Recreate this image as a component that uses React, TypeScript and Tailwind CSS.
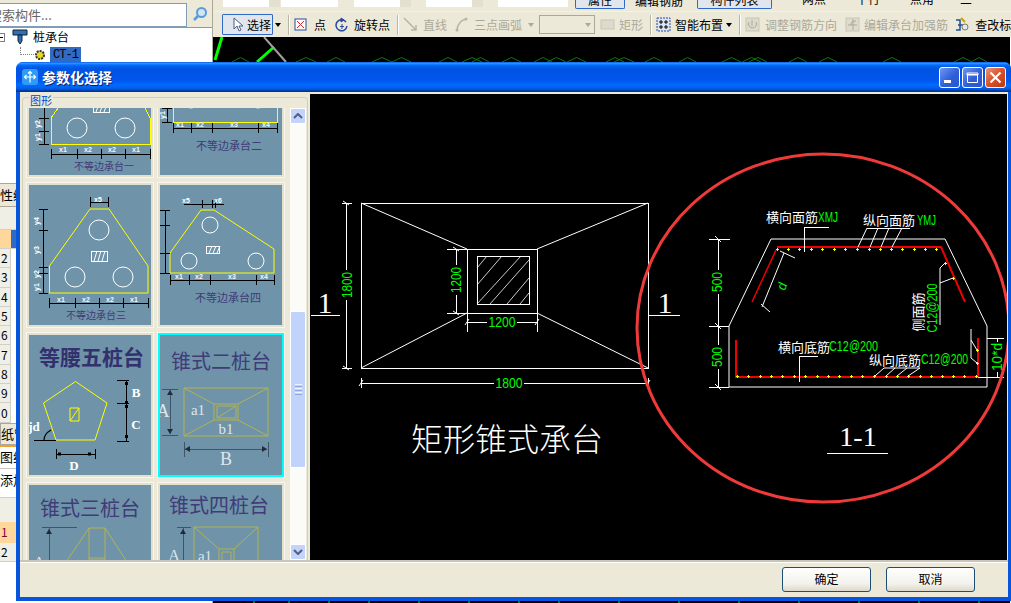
import React from 'react';

const CJK = '"Noto Sans CJK SC", "Liberation Sans", sans-serif';
const SERIF = '"Liberation Serif", "Noto Sans CJK SC", serif';
const CAD = '"Liberation Sans", "Noto Sans CJK SC", sans-serif';

type TextProps = React.SVGProps<SVGTextElement>;

function Label({ x, y, size = 12, fill = '#fff', family = CJK, rotate, bold, children, anchor = 'middle', ...rest }: {
  x: number; y: number; size?: number; fill?: string; family?: string; rotate?: number; bold?: boolean; anchor?: 'start' | 'middle' | 'end'; children: React.ReactNode;
} & Omit<TextProps, 'x' | 'y' | 'rotate'>) {
  return (
    <text
      x={x}
      y={y}
      fontSize={size}
      fill={fill}
      fontFamily={family}
      fontWeight={bold ? 700 : 400}
      textAnchor={anchor}
      dominantBaseline="central"
      transform={rotate ? `rotate(${rotate} ${x} ${y})` : undefined}
      {...rest}
    >
      {children}
    </text>
  );
}

// green dimension text, squeezed to the narrow CAD letter width
function DimText({ x, y, width, size = 14, rotate, anchor, children }: { x: number; y: number; width: number; size?: number; rotate?: number; anchor?: 'start' | 'middle'; children: React.ReactNode }) {
  return (
    <Label x={x} y={y} size={size} fill="#00ff00" family={CAD} rotate={rotate} anchor={anchor} textLength={width} lengthAdjust="spacingAndGlyphs">
      {children}
    </Label>
  );
}

function Lines({ d, stroke = '#fff', width = 1, crisp = true }: { d: string; stroke?: string; width?: number; crisp?: boolean }) {
  return <path d={d} fill="none" stroke={stroke} strokeWidth={width} shapeRendering={crisp ? 'crispEdges' : undefined} />;
}

function Hatch({ x, y, w, h }: { x: number; y: number; w: number; h: number }) {
  return (
    <>
      <rect x={x} y={y} width={w} height={h} fill="none" stroke="#fff" strokeWidth={1} shapeRendering="crispEdges" />
      <path
        d={`M${x + 3} ${y + h}l3 -${h}M${x + 7} ${y + h}l3 -${h}M${x + 11} ${y + h}l3 -${h}`}
        stroke="#fff"
        strokeWidth={1}
        fill="none"
      />
    </>
  );
}

function Pile({ cx, cy, r = 10 }: { cx: number; cy: number; r?: number }) {
  return <circle cx={cx} cy={cy} r={r} fill="none" stroke="#fff" strokeWidth={1} />;
}

function XLabels({ items, y }: { items: [number, string][]; y: number }) {
  return (
    <>
      {items.map(([x, t], i) => (
        <Label key={i} x={x} y={y} size={7} family={CAD} bold fill="#f2f5f7">{t}</Label>
      ))}
    </>
  );
}

function ThumbOne() {
  return (
    <>
      <Lines d="M58 108L51 118V144H150V118L145 108" stroke="#ffff00" />
      <Hatch x={93} y={104} w={16} h={8} />
      <Pile cx={77} cy={128} />
      <Pile cx={125} cy={128} />
      <Lines d="M44 108V144M39 118H49M39 131H49M39 144H49" stroke="#000" />
      <Label x={37} y={124} size={7} family={CAD} bold rotate={-90}>y2</Label>
      <Label x={37} y={137} size={7} family={CAD} bold rotate={-90}>y1</Label>
      <Lines d="M51 154H150M51 149V159M77 149V159M101 149V159M125 149V159M150 149V159" stroke="#000" />
      <XLabels y={149} items={[[63, 'x1'], [88, 'x2'], [112, 'x2'], [136, 'x1']]} />
      <Label x={104} y={165} size={10} fill="#3f3c78">不等边承台一</Label>
    </>
  );
}

function ThumbTwo() {
  return (
    <>
      <Lines d="M173 100V122H277V100" stroke="#ffff00" />
      <Pile cx={191} cy={100} r={8} />
      <Pile cx={258} cy={100} r={8} />
      <Lines d="M167 108V122M162 108H172M162 122H172" stroke="#000" />
      <Label x={162} y={115} size={7} family={CAD} bold rotate={-90}>y1</Label>
      <Lines d="M173 128H277M173 123V133M191 123V133M212 123V133M258 123V133M277 123V133" stroke="#000" />
      <XLabels y={124} items={[[180, 'x1'], [200, 'x2'], [234, 'x3'], [266, 'x4']]} />
      <Label x={229} y={145} size={11} fill="#3f3c78">不等边承台二</Label>
    </>
  );
}

function ThumbThree() {
  return (
    <>
      <Lines d="M49.5 293V266L90 209H109L148 266V293Z" stroke="#ffff00" crisp={false} />
      <Pile cx={99} cy={230} />
      <Pile cx={75} cy={277} />
      <Pile cx={123} cy={277} />
      <Hatch x={91} y={251} w={16} h={10} />
      <Lines d="M90 202H108M90 197V207M108 197V207" stroke="#000" />
      <Label x={98} y={199} size={7} family={CAD} bold>x5</Label>
      <Lines d="M43 209V293M39 209H48M39 230H48M39 267H48M39 273H48M39 293H48" stroke="#000" />
      <Label x={36} y={221} size={7} family={CAD} bold rotate={-90}>y4</Label>
      <Label x={36} y={250} size={7} family={CAD} bold rotate={-90}>y3</Label>
      <Label x={36} y={274} size={7} family={CAD} bold rotate={-90}>y2</Label>
      <Label x={36} y={287} size={7} family={CAD} bold rotate={-90}>y1</Label>
      <Lines d="M49 303H148M49 298V308M75 298V308M99 298V308M123 298V308M148 298V308" stroke="#000" />
      <XLabels y={299} items={[[61, 'x1'], [86, 'x2'], [110, 'x2'], [134, 'x1']]} />
      <Label x={96} y={314} size={10} fill="#3f3c78">不等边承台三</Label>
    </>
  );
}

function ThumbFour() {
  return (
    <>
      <Lines d="M170 273V253L201 210H214L274 249V273Z" stroke="#ffff00" crisp={false} />
      <Pile cx={210} cy={225} r={8} />
      <Pile cx={189} cy={261} r={8} />
      <Pile cx={256} cy={261} r={8} />
      <Hatch x={206} y={246} w={13} h={7} />
      <Lines d="M184 204H224M202 200V208M212 200V208M215 200V208" stroke="#000" />
      <Label x={186} y={200} size={7} family={CAD} bold>x5</Label>
      <Label x={218} y={200} size={7} family={CAD} bold>x6</Label>
      <Lines d="M165 210V273M160 210H170M160 225H170M160 253H170M160 273H170" stroke="#000" />
      <Lines d="M170 280H274M170 275V285M189 275V285M210 275V285M256 275V285M274 275V285" stroke="#000" />
      <XLabels y={276} items={[[179, 'x1'], [199, 'x2'], [232, 'x3'], [264, 'x4']]} />
      <Label x={228} y={297} size={11} fill="#3f3c78">不等边承台四</Label>
    </>
  );
}

function ThumbFive() {
  return (
    <>
      <Label x={91.5} y={356} size={21} fill="#33306e" bold>等腰五桩台</Label>
      <Lines d="M75.5 381.5L107 403L95 440H56L43.5 403Z" stroke="#ffff00" crisp={false} />
      <Lines d="M70 408H79V421H70ZM70 421L79 408" stroke="#ffff00" crisp={false} />
      <Lines d="M126.5 380V441M117 380H129M117 403H129M117 441H129M34 440H56M56 454H95M56 449V459M95 449V459" stroke="#000" />
      <path d="M125 382h3v3h-3zM125 401h3v3h-3zM125 405h3v3h-3zM125 435h3v3h-3zM58 452.500h3v3h-3zM88 452.500h3v3h-3z" fill="#000" />
      <path d="M44 440q0 -6 7 -10" fill="none" stroke="#000" strokeWidth={1.2} />
      <Label x={136} y={392} size={13} family={SERIF} bold>B</Label>
      <Label x={136} y={424} size={13} family={SERIF} bold>C</Label>
      <Label x={74} y={465} size={13} family={SERIF} bold>D</Label>
      <Label x={34} y={426} size={13} family={SERIF} bold>jd</Label>
    </>
  );
}

const OLIVE = '#b3b351';

function ThumbSix() {
  return (
    <>
      <Label x={221} y={360} size={20} fill="#3f3c78">锥式二桩台</Label>
      <Lines d="M184 388H268V436H184ZM214 404H238V420H214ZM217 406H236V418H217ZM217 418L236 406" stroke={OLIVE} crisp={false} />
      <Lines d="M184 388L214 404M268 388L238 404M184 436L214 420M268 436L238 420" stroke={OLIVE} crisp={false} />
      <Lines d="M162 389H178M162 435H178M170 390V434M184 449H267M184 442V457M268 442V457" stroke="#3e5468" />
      <path d="M170 390l-3 5h6zM170 434l-3 -5h6zM185 449l5 -3v6zM267 449l-5 -3v6z" fill="#1f2c38" />
      <Label x={163} y={411} size={18} family={SERIF} fill="#dfe6ea">A</Label>
      <Label x={198} y={410} size={15} family={SERIF} fill="#dfe6ea">a1</Label>
      <Label x={226} y={429} size={15} family={SERIF} fill="#dfe6ea">b1</Label>
      <Label x={226} y={459} size={18} family={SERIF} fill="#dfe6ea">B</Label>
    </>
  );
}

function ThumbSeven() {
  return (
    <>
      <Label x={90} y={507} size={20} fill="#3f3c78">锥式三桩台</Label>
      <Lines d="M42 527H77M49 527V570" stroke="#3e5468" />
      <path d="M49 529l-3 5h6z" fill="#1f2c38" />
      <Lines d="M89 528H105V560H89ZM89 528L66 562M105 528L127 562M89 558H105" stroke={OLIVE} crisp={false} />
      <Label x={39} y={562} size={16} family={SERIF} fill="#dfe6ea">A</Label>
    </>
  );
}

function ThumbEight() {
  return (
    <>
      <Label x={219} y={504} size={20} fill="#3f3c78">锥式四桩台</Label>
      <Lines d="M177 527H191M183 527V570" stroke="#3e5468" />
      <path d="M183 529l-3 5h6z" fill="#1f2c38" />
      <Lines d="M194 527H258V570H194ZM194 527L219 549M258 527L234 549M219 549H234V570H219ZM222 552H231V570H222Z" stroke={OLIVE} crisp={false} />
      <Label x={174} y={555} size={16} family={SERIF} fill="#dfe6ea">A</Label>
      <Label x={205} y={556} size={15} family={SERIF} fill="#dfe6ea">a1</Label>
    </>
  );
}

const thumbs = [
  { view: '29 35 122 140', node: <ThumbOne /> },
  { view: '160 35 122 140', node: <ThumbTwo /> },
  { view: '29 185 122 140', node: <ThumbThree /> },
  { view: '160 185 122 140', node: <ThumbFour /> },
  { view: '29 335 122 140', node: <ThumbFive /> },
  { view: '160 335 122 140', node: <ThumbSix />, selected: true },
  { view: '29 485 122 140', node: <ThumbSeven /> },
  { view: '160 485 122 140', node: <ThumbEight /> },
];

function ShapeCard({ view, selected, children }: { view: string; selected?: boolean; children: React.ReactNode }) {
  return (
    <div className="h-[146px] border border-[#f7f6ef] bg-[#e3e0d0] p-[2px]">
      <svg
        viewBox={view}
        className={selected ? 'block h-[140px] w-[122px] bg-[#6f93a9] outline-2 outline-[#00ffff]' : 'block h-[140px] w-[122px] bg-[#6f93a9]'}
      >
        {children}
      </svg>
    </div>
  );
}

function ScrollButton({ dir }: { dir: 'up' | 'down' }) {
  return (
    <div className="flex h-[16px] w-[16px] items-center justify-center rounded-[2px] border border-white bg-[#c3d3fb]">
      <svg width="10" height="6" viewBox="0 0 10 6">
        <path d={dir === 'up' ? 'M1 5l4 -4l4 4' : 'M1 1l4 4l4 -4'} fill="none" stroke="#4d6185" strokeWidth={2} />
      </svg>
    </div>
  );
}

function Scrollbar() {
  return (
    <div className="flex h-[452px] w-[16px] flex-col bg-[#fbfbf7]">
      <ScrollButton dir="up" />
      <div className="flex-1 pt-[187px]">
        <div className="flex h-[157px] items-center justify-center rounded-[2px] border border-white bg-[#c1d2fb]">
          <div className="flex w-[7px] flex-col gap-px">
            <div className="h-px bg-[#eef3ff]" />
            <div className="h-px bg-[#8fa8e0]" />
            <div className="h-px bg-[#eef3ff]" />
            <div className="h-px bg-[#8fa8e0]" />
            <div className="h-px bg-[#eef3ff]" />
            <div className="h-px bg-[#8fa8e0]" />
          </div>
        </div>
      </div>
      <ScrollButton dir="down" />
    </div>
  );
}

const topDots = [777, 788, 799, 811, 822, 834, 845, 857, 869, 880, 891, 902, 914, 925, 936];
const bottomDots = [737, 748, 760, 771, 782, 794, 805, 817, 828, 839, 851, 862, 874, 886, 897, 908, 920, 931, 942, 953, 964, 976];
const sideDots = [[945, 263], [953, 278], [977, 350], [977, 363]];

function Dot({ x, y }: { x: number; y: number }) {
  return <path d={`M${x - 1.5} ${y}h3M${x} ${y - 1.5}v3`} stroke="#ffff00" strokeWidth={1} shapeRendering="crispEdges" />;
}

function Drawing() {
  return (
    <svg viewBox="310 94 697 466" className="block h-[466px] w-[697px] bg-black">
      {/* plan view */}
      <Lines d="M361 203H648V368H361ZM467 249H537V313H467ZM477 256H529V304H477Z" />
      <Lines d="M361 203L467 249M648 203L537 249M361 368L467 313M648 368L537 313" crisp={false} />
      <path
        d="M477 268l10 -12M477 285l25 -29M477 304l44 -48M490 304l39 -44M507 304l22 -26M520 304l9 -11"
        fill="none"
        stroke="#fff"
        strokeWidth={0.8}
      />
      <Lines d="M346 203V368M342 203H352M342 368H352M456 249V313M447 249H467M447 313H467M467 322H537M467 313V332M537 313V332M361 383H648M361 378V388M648 378V388" />
      <path d="M343 201l6 4M343 366l6 4M453 247l6 4M453 311l6 4M465 325l4 -6M535 325l4 -6M359 386l4 -6M646 386l4 -6" stroke="#fff" strokeWidth={1} />
      <rect x={340} y={270} width={12} height={30} fill="#000" />
      <DimText x={347} y={285} width={26} rotate={-90}>1800</DimText>
      <rect x={450} y={265} width={12} height={30} fill="#000" />
      <DimText x={456} y={280} width={26} rotate={-90}>1200</DimText>
      <rect x={487} y={316} width={30} height={12} fill="#000" />
      <DimText x={502} y={322} width={27}>1200</DimText>
      <rect x={494} y={377} width={30} height={12} fill="#000" />
      <DimText x={509} y={383} width={27}>1800</DimText>
      <Lines d="M311 315H340M649 315H680" />
      <Label x={325} y={302} size={30} family={SERIF}>1</Label>
      <Label x={665} y={302} size={30} family={SERIF}>1</Label>
      <Label x={507} y={437} size={32} fontWeight={300}>矩形锥式承台</Label>

      {/* section 1-1 */}
      <Lines d="M729 387V326L771 239H945L987 326V387Z" crisp={false} />
      <Lines d="M718 239V387M709 239H730M709 326H729M709 387H729" />
      <path d="M715 236l6 6M715 323l6 6M715 384l6 6" stroke="#fff" strokeWidth={1} />
      <rect x={711} y={270} width={13} height={24} fill="#000" />
      <rect x={711} y={345} width={13} height={24} fill="#000" />
      <DimText x={717} y={282} width={20} rotate={-90}>500</DimText>
      <DimText x={717} y={357} width={20} rotate={-90}>500</DimText>
      <Lines d="M777 247H941L965 302" stroke="#f00000" width={2} crisp={false} />
      <Lines d="M776 250L752 302" stroke="#f00000" width={1.5} crisp={false} />
      <Lines d="M736 340V377H978V338" stroke="#f00000" width={2} />
      {topDots.map((x) => <Dot key={x} x={x} y={249} />)}
      {bottomDots.map((x) => <Dot key={x} x={x} y={376} />)}
      {sideDots.map(([x, y]) => <Dot key={y} x={x} y={y} />)}
      <Lines d="M804 252V227H829M867 228H910" />
      <Lines d="M867 228L858 247M878 228L870 247M889 228L881 247M902 228L892 247M784 253L762 307M780 251L795 258M761 304L770 312" crisp={false} />
      <Lines d="M940 325V268L945 263M940 283L953 278M971 329V358L977 363M971 340L977 350" crisp={false} />
      <Lines d="M799 382V356H818M987 338H1004M978 377H1004M997 338V377" />
      <Lines d="M884 368H920M884 368L875 376M895 368L886 376M907 368L897 376M920 368L908 376" crisp={false} />
      <Label x={766} y={216} size={13} anchor="start">横向面筋</Label>
      <DimText x={818} y={217} width={20} size={14} anchor="start">XMJ</DimText>
      <Label x={863} y={219} size={13} anchor="start">纵向面筋</Label>
      <DimText x={917} y={220} width={19} size={14} anchor="start">YMJ</DimText>
      <Label x={782} y={286} size={13} fill="#00ff00" family={CAD} rotate={-65}>d</Label>
      <Label x={917} y={312} size={13} rotate={-90}>侧面筋</Label>
      <DimText x={932} y={308} width={49} rotate={-90}>C12@200</DimText>
      <Label x={778} y={346} size={13} anchor="start">横向底筋</Label>
      <DimText x={829} y={346} width={49} anchor="start">C12@200</DimText>
      <Label x={869} y={359} size={13} anchor="start">纵向底筋</Label>
      <DimText x={921} y={359} width={47} anchor="start">C12@200</DimText>
      <rect x={990} y={342} width={14} height={30} fill="#000" />
      <DimText x={997} y={357} width={28} rotate={-90}>10*d</DimText>
      <Label x={858} y={436} size={28} family={SERIF}>1-1</Label>
      <Lines d="M827 453H888" />

      <ellipse cx={823} cy={328} rx={186} ry={174} fill="none" stroke="#f03a3a" strokeWidth={3} />
    </svg>
  );
}

function WinButton({ kind }: { kind: 'min' | 'max' | 'close' }) {
  const bg = kind === 'close'
    ? 'bg-[linear-gradient(135deg,#e9967a,#d9502a_50%,#b83a12)]'
    : 'bg-[linear-gradient(135deg,#6f97ee,#2f5fd8_55%,#2a56cf)]';
  return (
    <div className={`flex h-[21px] w-[21px] items-center justify-center rounded-[3px] border border-white ${bg}`}>
      <svg width="15" height="15" viewBox="0 0 15 15">
        {kind === 'min' && <rect x={2} y={10} width={7} height={3} fill="#fff" />}
        {kind === 'max' && <path d="M2.500 4.500h10v8h-10zM2 3h11v2H2z" fill="none" stroke="#fff" strokeWidth={1} />}
        {kind === 'close' && <path d="M2.500 2.500l10 10M12.500 2.500l-10 10" stroke="#fff" strokeWidth={2.2} />}
      </svg>
    </div>
  );
}

function DialogButton({ children }: { children: React.ReactNode }) {
  return (
    <button className="h-[25px] w-[89px] rounded-[3px] border border-[#1f4e79] bg-[linear-gradient(#ffffff,#f2f1ea_70%,#dcd9cb)] text-[12px] text-black">
      {children}
    </button>
  );
}

function Dialog() {
  return (
    <div
      className="absolute left-[16px] top-[62px] flex h-[539px] w-[995px] flex-col rounded-t-[7px] bg-[#0855dd] pb-[4px] pl-[4px] pr-[3px]"
      style={{ fontFamily: CJK }}
    >
      <div className="-ml-[4px] -mr-[3px] flex h-[30px] items-center rounded-t-[7px] bg-[linear-gradient(#0058ee_0%,#3593ff_4%,#288eff_6%,#127dff_8%,#036ffc_10%,#0262ee_14%,#0057e5_20%,#0054e3_24%,#0055eb_56%,#005bf5_66%,#026afe_76%,#0062ef_86%,#0052d6_92%,#0040ab_94%,#003092_100%)] pl-[6px] pr-[5px]">
        <div className="flex h-[16px] w-[16px] items-center justify-center rounded-[3px] bg-[#2f9bf5]">
          <svg width="14" height="14" viewBox="0 0 14 14">
            <path d="M7 1.500V12.500M1.500 7H12.500M3.500 5L1.500 7l2 2M10.500 5l2 2l-2 2M5 3.500l2 -2l2 2" fill="none" stroke="#fff" strokeWidth={1.2} />
          </svg>
        </div>
        <span className="ml-[4px] text-[14px] font-bold text-white [text-shadow:1px_1px_#0f1f6a]">参数化选择</span>
        <div className="ml-auto flex gap-[2px]">
          <WinButton kind="min" />
          <WinButton kind="max" />
          <WinButton kind="close" />
        </div>
      </div>

      <div className="flex min-h-0 flex-1 flex-col bg-[#ece9d8]">
        <div className="flex h-[468px] pr-px pt-[2px]">
          <div className="relative flex w-[290px] pl-[6px] pt-[14px]">
            <div className="absolute bottom-0 left-[2px] right-[2px] top-[3px] rounded-t-[4px] border border-b-0 border-[#d0d0bf]" />
            <span className="absolute left-[9px] -top-[1px] bg-[#ece9d8] px-px text-[11px] leading-[14px] text-[#0046d5]">图形</span>
            <div className="relative h-[452px] w-[264px] overflow-hidden">
              <div className="-mt-[76px] grid grid-cols-[128px_128px] gap-x-[3px] gap-y-[4px]">
                {thumbs.map((t) => (
                  <ShapeCard key={t.view} view={t.view} selected={t.selected}>{t.node}</ShapeCard>
                ))}
              </div>
            </div>
            <div className="relative">
              <Scrollbar />
            </div>
          </div>
          <Drawing />
        </div>
        <div className="flex flex-1 items-center justify-end gap-[15px] border-t-2 border-t-[#c9c6b6] pb-px pr-[33px] shadow-[inset_0_1px_#ffffff]">
          <DialogButton>确定</DialogButton>
          <DialogButton>取消</DialogButton>
        </div>
      </div>
    </div>
  );
}

function Sep({ className }: { className: string }) {
  return <div className={`h-[20px] w-[2px] shrink-0 border-l border-r border-l-[#b8b5a5] border-r-white ${className}`} />;
}

function Caret({ grey, className }: { grey?: boolean; className: string }) {
  return <span className={`h-0 w-0 shrink-0 border-x-[3px] border-t-[4px] border-x-transparent ${grey ? 'border-t-[#aca899]' : 'border-t-black'} ${className}`} />;
}

function Tool({ icon, label, grey, className, gap = 'ml-[5px]' }: { icon: React.ReactNode; label: string; grey?: boolean; className: string; gap?: string }) {
  return (
    <div className={`flex shrink-0 items-center ${grey ? 'text-[#aca899]' : 'text-black'} ${className}`}>
      {icon}
      <span className={gap}>{label}</span>
    </div>
  );
}

function Icon({ children }: { children: React.ReactNode }) {
  return <svg width="15" height="15" viewBox="0 0 15 15" className="shrink-0">{children}</svg>;
}

function Toolbar() {
  return (
    <div className="flex h-[25px] items-center whitespace-nowrap bg-[#ece9d8] pl-[8px] text-[12px]">
      <div className="flex h-[21px] w-[51px] shrink-0 items-center rounded-[1px] border border-[#316ac5] bg-[#e1e6ee] pl-[8px]">
        <Icon><path d="M3 1v11l3 -3l2 5l2 -1l-2 -4h4z" fill="#fff" stroke="#4a5a80" /></Icon>
        <span className="ml-[1px]">选择</span>
      </div>
      <Caret className="ml-[2px]" />
      <Sep className="ml-[7px]" />
      <Tool
        className="ml-[3px]"
        gap="ml-[6px]"
        label="点"
        icon={<Icon><rect x={2} y={2} width={11} height={11} fill="#fff" stroke="#274a9c" /><path d="M4 4l7 7M11 4l-7 7" stroke="#e02020" /></Icon>}
      />
      <Tool
        className="ml-[8px]"
        label="旋转点"
        icon={<Icon><path d="M12 5a5.500 5.500 0 1 0 1 4" fill="none" stroke="#274a9c" strokeWidth={1.5} /><path d="M7 1l3 2l-3 2zM8 7v5M6 9.500h4" fill="#274a9c" stroke="#274a9c" /></Icon>}
      />
      <Sep className="ml-[7px]" />
      <Tool
        grey
        className="ml-[4px]"
        label="直线"
        icon={<Icon><path d="M1 1l12 12M13 8v5h-5" fill="none" stroke="#b8b5a5" strokeWidth={1.5} /></Icon>}
      />
      <Tool
        grey
        className="ml-[7px]"
        label="三点画弧"
        icon={<Icon><path d="M3 13q1 -9 9 -11" fill="none" stroke="#b8b5a5" strokeWidth={1.5} /><circle cx={3} cy={13} r={1.500} fill="#b8b5a5" /><circle cx={12} cy={2} r={1.500} fill="#b8b5a5" /></Icon>}
      />
      <Caret grey className="ml-[6px]" />
      <div className="ml-[5px] flex h-[19px] w-[56px] shrink-0 items-center justify-end border border-[#aca899] pr-[3px]">
        <span className="h-0 w-0 border-x-[3px] border-t-[4px] border-x-transparent border-t-[#aca899]" />
      </div>
      <Tool
        grey
        className="ml-[5px]"
        gap="ml-[4px]"
        label="矩形"
        icon={<Icon><rect x={1} y={3} width={13} height={9} fill="#dedbcc" stroke="#c9c6b6" /></Icon>}
      />
      <Sep className="ml-[7px]" />
      <Tool
        className="ml-[4px]"
        gap="ml-[4px]"
        label="智能布置"
        icon={<Icon><rect x={1} y={1} width={13} height={13} fill="#dbe4f5" stroke="#274a9c" strokeDasharray="2 1" /><path d="M5 3v4M3 5h4M10 3v4M8 5h4M5 8v4M3 10h4M10 8v4M8 10h4" stroke="#000" /></Icon>}
      />
      <Caret className="ml-[3px]" />
      <Sep className="ml-[7px]" />
      <Tool
        grey
        className="ml-[4px]"
        label="调整钢筋方向"
        icon={<Icon><rect x={1} y={1} width={13} height={13} fill="#dedbcc" stroke="#c9c6b6" /><path d="M4 5a4 4 0 1 0 7 0M7 3v6" fill="none" stroke="#aca899" /></Icon>}
      />
      <Tool
        grey
        className="ml-[8px]"
        gap="ml-[4px]"
        label="编辑承台加强筋"
        icon={<Icon><rect x={1} y={1} width={13} height={13} fill="#dedbcc" stroke="#c9c6b6" /><path d="M8 2v11M3 8h9M11 4q-5 0 -5 4" fill="none" stroke="#aca899" /></Icon>}
      />
      <Tool
        className="ml-[7px]"
        label="查改标"
        icon={<Icon><path d="M1 3h4v10H1M3 8h5" fill="none" stroke="#1f4e9c" strokeWidth={1.5} /><path d="M6 1l4 4" stroke="#c9a400" strokeWidth={2} /><circle cx={10} cy={10} r={3} fill="#dbe9f8" stroke="#8a7a50" /></Icon>}
      />
    </div>
  );
}

function TopStrip() {
  return (
    <div className="flex h-[12px] items-start overflow-hidden border-b border-b-[#f4f2e8] bg-[#ece9d8] text-[12px]">
      <div className="ml-[9px] flex h-[7px] w-[57px] shrink-0 justify-end bg-white"><span className="w-[11px] bg-[#e3e0d0]" /></div>
      <div className="ml-[1px] h-[7px] w-[57px] shrink-0 bg-white" />
      <div className="ml-[16px] flex h-[7px] w-[57px] shrink-0 justify-end bg-white"><span className="w-[11px] bg-[#e3e0d0]" /></div>
      <div className="ml-[15px] flex h-[7px] w-[57px] shrink-0 justify-end bg-white"><span className="w-[11px] bg-[#e3e0d0]" /></div>
      <div className="ml-[15px] h-[7px] w-[70px] shrink-0 bg-white" />
      <div className="ml-[7px] flex h-[9px] w-[50px] shrink-0 items-end justify-center rounded-b-[2px] border border-t-0 border-[#316ac5] bg-[#e1e6ee] leading-[16px]">属性</div>
      <span className="ml-[10px] -mt-[7px] shrink-0 leading-[16px]">编辑钢筋</span>
      <div className="ml-[14px] flex h-[9px] w-[75px] shrink-0 items-end justify-center rounded-b-[2px] border border-t-0 border-[#316ac5] bg-[#e1e6ee] leading-[16px]">构件列表</div>
      <span className="ml-[30px] -mt-[9px] shrink-0 leading-[16px]">两点</span>
      <span className="ml-[30px] -mt-[9px] shrink-0 leading-[16px]">平行</span>
      <span className="ml-[30px] -mt-[9px] shrink-0 leading-[16px]">点角</span>
      <span className="ml-[26px] -mt-[9px] shrink-0 leading-[16px]">三</span>
    </div>
  );
}

const gridRows = ['2', '3', '4', '5', '6', '7', '8', '9', '0'];

function LeftPanel() {
  return (
    <div className="flex h-full w-[213px] shrink-0 flex-col border-r border-r-[#aca899] bg-white text-[12px]">
      <div className="flex h-[28px] shrink-0 items-start border-b border-b-[#7f9db9] bg-[#ece9d8] pt-[3px]">
        <div className="-ml-[13px] flex h-[24px] w-[200px] items-center border border-[#7f9db9] bg-white pl-[1px] text-[13px] text-[#666]">搜索构件...</div>
        <div className="ml-[3px] flex h-[22px] w-[20px] items-center justify-center">
          <svg width="16" height="16" viewBox="0 0 16 16">
            <circle cx={9.500} cy={6.500} r={4.500} fill="#cfe5f8" stroke="#5b9bd5" strokeWidth={2} />
            <path d="M6 10l-4 4" stroke="#5b9bd5" strokeWidth={2.500} />
          </svg>
        </div>
      </div>
      <div className="flex h-[18px] shrink-0 items-center">
        <div className="flex h-[9px] w-[5px] items-center border border-l-0 border-[#7f7f7f]"><span className="h-px w-[3px] bg-black" /></div>
        <svg width="16" height="16" viewBox="0 0 16 16" className="ml-[7px]">
          <path d="M1 1h14v5H1z" fill="#2f6fb5" stroke="#123" />
          <path d="M6 6h4v6l-2 3l-2 -3z" fill="#2f6fb5" stroke="#123" />
        </svg>
        <span className="ml-[5px]">桩承台</span>
      </div>
      <div className="flex h-[17px] shrink-0 items-center">
        <div className="ml-[20px] h-[8px] w-[14px] -translate-y-[4px] border-b border-l border-dotted border-[#808080]" />
        <svg width="12" height="12" viewBox="0 0 12 12">
          <circle cx={6} cy={6} r={4} fill="#e8d820" stroke="#333" strokeDasharray="2 1" strokeWidth={2} />
        </svg>
        <span className="ml-[4px] flex h-[16px] w-[31px] items-center justify-center bg-[#316ac5] text-[12px] tracking-[-1px] text-black" style={{ fontFamily: '"Liberation Mono", monospace' }}>CT-1</span>
      </div>
      {/* grid peeks out to the left of the dialog */}
      <div className="mt-[120px] flex h-[24px] shrink-0 items-center border-y border-y-[#aca899] bg-[#ece9d8] text-[13px]">性编</div>
      <div className="h-[23px] shrink-0 border-b border-b-[#d0d0c8] bg-[#f0efe6]" />
      <div className="flex h-[19px] shrink-0 border-b border-b-[#d0d0c8]">
        <div className="w-[11px] bg-[#ffd79a]" />
        <div className="w-[6px] bg-[#316ac5]" />
      </div>
      {gridRows.map((n) => (
        <div key={n} className="flex h-[19.300px] w-[11px] shrink-0 items-center border-b border-r border-b-[#d0d0c8] border-r-[#d0d0c8] bg-[#f0efe6] pl-[1px]">{n}</div>
      ))}
      <div className="flex h-[22px] shrink-0 items-center border border-[#aca899] bg-[#ece9d8] text-[13px]">纸管</div>
      <div className="h-[2px] shrink-0 bg-[#f0a030]" />
      <div className="flex h-[21px] shrink-0 items-center text-[13px]">图纸</div>
      <div className="flex h-[24px] shrink-0 items-center border-t border-t-[#c8c8c0] text-[13px]">添加</div>
      <div className="mt-[5px] h-[25px] shrink-0 border-t border-t-[#d0d0c8] bg-[#f0efe6]" />
      <div className="flex h-[21px] w-[16px] shrink-0 items-center bg-[#ffd79a] pl-[1px] text-[#800040]">1</div>
      <div className="flex h-[19px] w-[16px] shrink-0 items-center border-b border-b-[#d0d0c8] bg-[#f0efe6] pl-[1px]">2</div>
    </div>
  );
}

// small dark green arcs along the top of the drawing area
const bumps = [
  [233, 250], [297, 317], [328, 346], [373, 393], [393, 412], [440, 458], [463, 483], [473, 490], [503, 522],
  [535, 553], [548, 567], [568, 587], [607, 625], [615, 635], [646, 664], [680, 697], [723, 742], [743, 762],
  [750, 768], [790, 808], [820, 838], [884, 902], [955, 973], [972, 988],
];

function Canvas() {
  return (
    <svg viewBox="214 37 797 566" className="block h-[566px] w-[797px] bg-black">
      <path d="M223 37L216 60" stroke="#00ff00" strokeWidth={3} />
      <path d="M275 47L258 62" stroke="#00ff00" strokeWidth={3} />
      <path d="M265 37L287 62" stroke="#a0a0a0" strokeWidth={2} />
      <path
        d={bumps.map(([a, b]) => `M${a} 62L${(a + b) / 2} 57.500L${b} 62`).join('')}
        fill="none"
        stroke="#0a7a0a"
        strokeWidth={1}
      />
      <path d="M255 601v2M290 601v2M330 601v2M370 601v2M420 601v2M470 601v2M520 601v2M560 601v2M620 601v2M680 601v2M740 601v2M800 601v2M860 601v2M920 601v2M980 601v2" stroke="#00ff00" />
    </svg>
  );
}

export default function App() {
  return (
    <div className="relative h-[603px] w-[1011px] overflow-hidden bg-white" style={{ fontFamily: CJK }}>
      <div className="flex h-full">
        <LeftPanel />
        <div className="flex min-w-0 flex-1 flex-col">
          <div className="h-[37px] shrink-0 bg-[#ece9d8] pl-[1px]">
            <TopStrip />
            <Toolbar />
          </div>
          <Canvas />
        </div>
      </div>
      <Dialog />
    </div>
  );
}
